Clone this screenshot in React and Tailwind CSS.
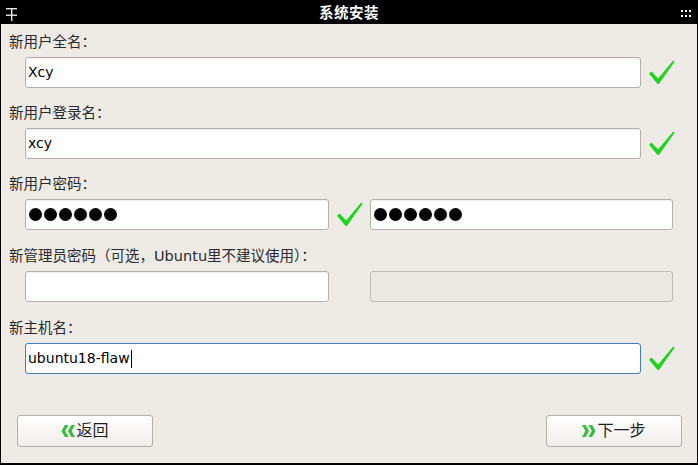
import React from 'react';

const FONT = { fontFamily: '"DejaVu Sans", "Noto Sans CJK SC", sans-serif' };

// green validation tick shown beside a valid field
const Tick = () => (
  <svg width="26" height="24" viewBox="0 0 26 24" className="shrink-0 -mt-[2px]">
    <polygon points="0,13.8 2.6,11.6 9.1,18.6 24.2,0.6 25.6,1.8 9.9,24 8.6,24" fill="#1ed41e" />
  </svg>
);

const Chevrons = ({ dir = 'left' }) => (
  <svg width="14" height="12" viewBox="0 0 14 12" className={dir === 'right' ? '' : '-scale-x-100'}>
    <polygon points="0,0 3.6,0 7,6 3.6,12 0,12 3.4,6" fill="#2fbf3a" />
    <polygon points="6.5,0 10.1,0 13.5,6 10.1,12 6.5,12 9.9,6" fill="#2fbf3a" />
  </svg>
);

const Field = ({ children, focused, disabled, className = '' }) => (
  <div
    className={`h-[31px] flex items-center px-[2px] rounded-[3px] border ${
      focused
        ? 'border-[#3d7fc0] bg-white'
        : disabled
          ? 'border-[#bdbab5] bg-[#ebe8e4]'
          : 'border-[#b3b0ab] bg-white shadow-[inset_0_1px_1px_rgba(0,0,0,0.06)]'
    } text-[14px] text-black ${className}`}
  >
    {children}
  </div>
);

const Dots = () => (
  <div className="flex gap-[2px] pl-[1px]">
    {[0, 1, 2, 3, 4, 5].map((i) => (
      <div key={i} className="w-[13px] h-[13px] rounded-full bg-black" />
    ))}
  </div>
);

const Label = ({ children }) => (
  <div className="h-[20px] leading-[20px] text-[14.5px] text-[#2a2a2a] mb-[5px]">{children}</div>
);

const Button = ({ children }) => (
  <button className="w-[136px] h-[32px] rounded-[3px] border border-[#b4b1ac] bg-gradient-to-b from-white to-[#efedea] flex items-center justify-center gap-[1px] text-[16px] text-[#1e1e1e]">
    {children}
  </button>
);

export default function App() {
  return (
    <div className="w-[698px] h-[465px] flex flex-col bg-black" style={FONT}>
      {/* title bar */}
      <div className="h-[24px] shrink-0 relative flex items-center justify-center">
        <svg width="12" height="14" viewBox="0 0 12 14" className="absolute left-[6px] top-[7px]">
          <rect x="0" y="1" width="11" height="1.4" fill="#e8e8e8" />
          <rect x="0" y="7.5" width="11" height="1.4" fill="#e8e8e8" />
          <rect x="5" y="1" width="1.4" height="13" fill="#e8e8e8" />
        </svg>
        <span className="text-white font-bold text-[14.5px] tracking-[0.5px]" style={{ fontFamily: '"Noto Sans CJK SC", sans-serif' }}>
          系统安装
        </span>
        <div className="absolute right-[7px] top-[10px] grid grid-cols-3 gap-x-[2px] gap-y-[3px]">
          {[0, 1, 2, 3, 4, 5].map((i) => (
            <div key={i} className="w-[2px] h-[2px] bg-white" />
          ))}
        </div>
      </div>

      {/* form body */}
      <div className="flex-1 flex flex-col bg-[#eeebe7] border-l border-r border-b-2 border-black pl-[8px] pt-[8px]">
        <div>
          <Label>新用户全名：</Label>
          <div className="flex items-center gap-[8px] pl-[16px]">
            <Field className="w-[616px]">Xcy</Field>
            <Tick />
          </div>
        </div>

        <div className="mt-[15px]">
          <Label>新用户登录名：</Label>
          <div className="flex items-center gap-[8px] pl-[16px]">
            <Field className="w-[616px]">xcy</Field>
            <Tick />
          </div>
        </div>

        <div className="mt-[15px]">
          <Label>新用户密码：</Label>
          <div className="flex items-center pl-[16px]">
            <Field className="w-[304px]"><Dots /></Field>
            <div className="w-[41px] flex justify-center"><Tick /></div>
            <Field className="w-[303px]"><Dots /></Field>
          </div>
        </div>

        <div className="mt-[16px]">
          <Label>新管理员密码（可选，Ubuntu里不建议使用）：</Label>
          <div className="flex items-center pl-[16px]">
            <Field className="w-[304px]" />
            <div className="w-[41px]" />
            <Field className="w-[303px]" disabled />
          </div>
        </div>

        <div className="mt-[16px]">
          <Label>新主机名：</Label>
          <div className="flex items-center gap-[8px] pl-[16px]">
            <Field className="w-[616px]" focused>
              ubuntu18-flaw
              <span className="inline-block w-[1px] h-[18px] bg-black ml-[1px]" />
            </Field>
            <Tick />
          </div>
        </div>

        <div className="flex-1" />

        {/* navigation */}
        <div className="flex justify-between pl-[8px] pr-[15px] pb-[16px]">
          <Button>
            <Chevrons dir="left" />
            返回
          </Button>
          <Button>
            <Chevrons dir="right" />
            下一步
          </Button>
        </div>
      </div>
    </div>
  );
}
